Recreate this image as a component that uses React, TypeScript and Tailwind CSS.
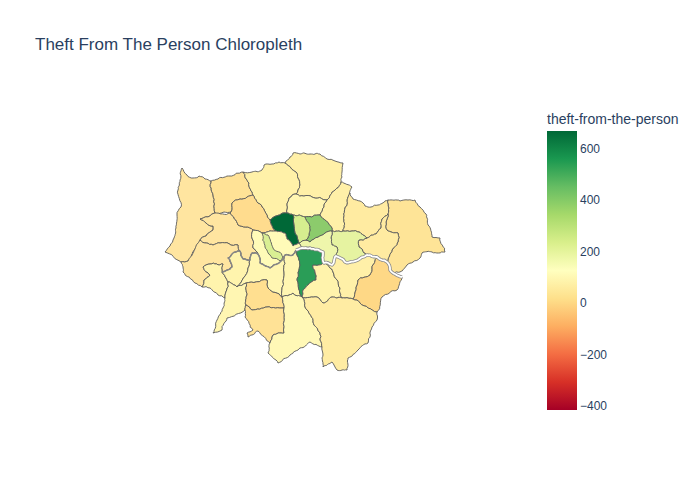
const boroughs: [string, string][] = [
  ["#ffe5a0", "182,168 187,175 193,178 199,176 205,179 211,181 213,195 215,213 200,219 206,223 213,226 213,230 206,236 200,240 195,249 188,261 181,262 165,252 170,246 174,238 176,228 177,215 181,207 178,190 180,180"],
  ["#ffe296", "211,181 218,179 230,176 243,172 249,183 253,195 247,197 240,199 232,203 231,212 224,212 215,213 213,195"],
  ["#fff1a8", "243,172 252,172 262,170 264,165 272,164 279,162 285,163 291,168 296,172 298,178 300,185 298,190 296,194 289,198 287,205 287,213 281,214 270,220 262,207 253,195 249,183"],
  ["#fff0a8", "285,163 290,157 293,153 300,154 310,154 320,154 327,159 335,161 343,163 342,172 341,182 335,190 327,200 312,197 296,194 298,190 300,185 298,178 296,172 291,168"],
  ["#fff6b2", "289,198 296,194 312,197 327,200 324,207 320,215 318,215 305,217 293,215 287,213 287,205"],
  ["#fff0a8", "341,182 352,187 348,197 345,208 344,220 343,231 332,231 332,228 320,215 324,207 327,200 335,190"],
  ["#ffeba1", "348,197 350,193 353,199 360,201 365,206 371,207 378,205 388,200 389,208 388,214 382,219 381,228 376,234 367,238 359,232 352,231 343,231 344,220 345,208"],
  ["#fee497", "388,200 400,201 408,200 415,200 420,207 426,214 428,225 432,237 440,238 445,252 432,252 422,253 420,258 413,262 407,265 400,272 393,273 390,270 387,262 392,250 398,242 398,233 387,230 386,222 388,214 389,208"],
  ["#ffeba1", "382,219 388,214 386,222 387,230 398,233 398,242 392,250 387,262 377,257 367,255 364,253 359,247 359,240 367,238 376,234 381,228"],
  ["#e6f3a1", "332,231 343,231 352,231 359,232 367,238 359,240 359,247 364,253 367,255 358,260 345,262 336,256 337,247 332,245 331,238"],
  ["#eef6ab", "299,243 306,240 310,242 318,237 325,233 332,231 331,238 332,245 337,247 336,256 332,265 324,263 323,252 310,248 302,248"],
  ["#8ccb6c", "305,217 318,215 320,215 332,228 332,231 325,233 318,237 310,242 306,240 310,230"],
  ["#d6ee8f", "293,215 305,217 310,230 306,240 299,243 295,233"],
  ["#006837", "270,220 281,214 287,213 293,215 295,233 299,243 293,246 287,239 285,233 275,231"],
  ["#ffe5a0", "200,240 213,245 220,243 238,245 240,251 243,259 250,260 252,253 258,254 253,248 253,230 238,225 230,213 215,213 200,219 206,223 213,226 213,230 206,236"],
  ["#ffdc8e", "232,203 240,199 247,197 253,195 262,207 270,220 275,231 262,233 253,230 238,225 230,213 231,212"],
  ["#fffbb8", "253,230 262,233 275,231 285,233 287,239 293,246 299,243 302,248 296,250 293,255 285,255 280,262 270,268 260,263 258,254 253,248"],
  ["#d9ef93", "262,233 268,235 273,248 283,257 280,261 272,258 265,247"],
  ["#ffe5a0", "181,262 188,261 200,240 213,245 220,243 238,245 240,251 232,254 228,258 232,267 222,272 223,264 210,264 203,267 210,275 204,280 202,287 195,283 183,272"],
  ["#fff4ad", "203,267 210,264 223,264 222,272 228,282 225,298 218,295 210,288 202,287 204,280 210,275"],
  ["#fff4ad", "222,272 232,267 228,258 232,254 240,251 243,259 250,260 248,268 237,287 228,282"],
  ["#fff6b2", "248,268 250,260 252,253 258,254 260,263 270,268 280,262 285,255 284,272 282,297 268,288 267,280 246,283 237,287"],
  ["#fff6b2", "228,282 237,287 246,283 247,295 246,305 245,310 227,318 222,330 213,333 217,320 223,308 225,298"],
  ["#ffdf90", "246,283 267,280 268,288 282,297 284,308 267,307 252,310 246,305 247,295"],
  ["#ffe296", "246,305 252,310 267,307 284,308 284,333 273,335 270,343 258,331 248,337 247,333 253,330 245,317 245,310"],
  ["#fff8b6", "282,297 293,293 302,297 307,310 313,322 320,333 322,347 310,342 300,348 290,355 278,363 268,353 270,343 273,335 284,333 284,308"],
  ["#fff6b2", "285,255 293,255 296,250 297,255 300,265 297,280 302,297 293,293 282,297 284,272"],
  ["#2a9d57", "296,250 302,248 310,248 323,252 324,263 313,265 315,272 316,280 308,285 303,290 302,297 297,280 300,265 297,255"],
  ["#fff3ac", "324,263 333,272 340,288 342,298 332,297 323,303 317,297 302,297 303,290 308,285 316,280 315,272 313,265"],
  ["#fff0a8", "324,263 332,265 336,256 345,262 358,260 367,255 377,257 372,268 370,275 358,280 353,299 345,298 342,298 340,288 333,272"],
  ["#fed886", "377,257 387,262 390,270 395,274 402,277 397,290 382,297 377,312 360,303 353,299 358,280 370,275 372,268"],
  ["#ffeca3", "302,297 317,297 323,303 332,297 342,298 345,298 353,299 360,303 377,312 377,320 372,327 368,343 358,350 348,358 347,370 337,370 332,362 323,367 323,355 322,347 320,333 313,322 307,310"],
];

const riverWest = "222,272 232,267 228,258 232,254 240,251 243,259 250,260 252,253 258,254 260,263 270,268 280,262 285,255 293,255 296,250";
const riverEast = "296,250 302,248 310,248 323,252 324,263 332,265 336,256 345,262 358,260 367,255 377,257 387,262 390,270 395,274 402,277";

type P = [number, number];

function parse(s: string): P[] {
  return s.split(" ").map((v) => v.split(",").map(Number) as P);
}

function noise(a: P, b: P): number {
  const h = Math.sin(a[0] * 12.9898 + a[1] * 78.233 + b[0] * 37.719 + b[1] * 19.13) * 43758.5453;
  return (h - Math.floor(h)) * 2 - 1;
}

function roughEdge(a: P, b: P, depth: number): P[] {
  const len = Math.hypot(b[0] - a[0], b[1] - a[1]);
  if (depth === 0 || len < 2.5) return [];
  const n = noise(a, b) * Math.min(1.1, len * 0.14);
  const m: P = [
    (a[0] + b[0]) / 2 - ((b[1] - a[1]) / len) * n,
    (a[1] + b[1]) / 2 + ((b[0] - a[0]) / len) * n,
  ];
  return [...roughEdge(a, m, depth - 1), m, ...roughEdge(m, b, depth - 1)];
}

function rough(pts: P[], closed: boolean): string {
  const out: P[] = [];
  const count = closed ? pts.length : pts.length - 1;
  for (let i = 0; i < count; i++) {
    const a = pts[i];
    const b = pts[(i + 1) % pts.length];
    const flip = a[0] > b[0] || (a[0] === b[0] && a[1] > b[1]);
    const mids = flip ? roughEdge(b, a, 3).reverse() : roughEdge(a, b, 3);
    out.push(a, ...mids);
  }
  if (!closed) out.push(pts[pts.length - 1]);
  return out.map((p) => `${p[0].toFixed(1)},${p[1].toFixed(1)}`).join(" ");
}

const ticks = ["600", "400", "200", "0", "−200", "−400"];

export default function App() {
  return (
    <div className="h-[500px] w-[700px] overflow-hidden bg-white font-['Liberation_Sans',sans-serif] text-[#2a3f5f]">
      <h1 className="pl-[35px] pt-[35px] text-[17px] leading-[20px] font-normal">
        Theft From The Person Chloropleth
      </h1>
      <div className="flex items-start">
        <svg className="ml-[160px] mt-[90px] shrink-0" width="290" height="235" viewBox="160 145 290 235">
          {boroughs.map(([fill, points], i) => (
            <polygon key={i} points={rough(parse(points), true)} fill={fill} stroke="#5a5a5a" strokeWidth="0.9" strokeLinejoin="round" />
          ))}
          <polyline points={rough(parse(riverWest), false)} fill="none" stroke="#868686" strokeWidth="1.5" strokeLinejoin="round" />
          <polyline points={rough(parse(riverEast), false)} fill="none" stroke="#8c8c8c" strokeWidth="3.4" strokeLinejoin="round" />
          <polyline points={rough(parse(riverEast), false)} fill="none" stroke="#ffffff" strokeWidth="1.8" strokeLinejoin="round" />
        </svg>
        <div className="ml-[97px] mt-[56px] flex flex-col">
          <div className="h-[20px] whitespace-nowrap text-[14px] leading-[16px]">theft-from-the-person</div>
          <div className="flex h-[279px]">
            <div className="w-[30px] bg-[linear-gradient(to_top,#a50026,#d73027,#f46d43,#fdae61,#fee08b,#ffffbf,#d9ef8b,#a6d96a,#66bd63,#1a9850,#006837)]" />
            <div className="ml-[3px] mt-[11px] flex h-[271px] flex-col justify-between text-[12px] leading-[14px]">
              {ticks.map((t) => (
                <span key={t}>{t}</span>
              ))}
            </div>
          </div>
        </div>
      </div>
    </div>
  );
}
